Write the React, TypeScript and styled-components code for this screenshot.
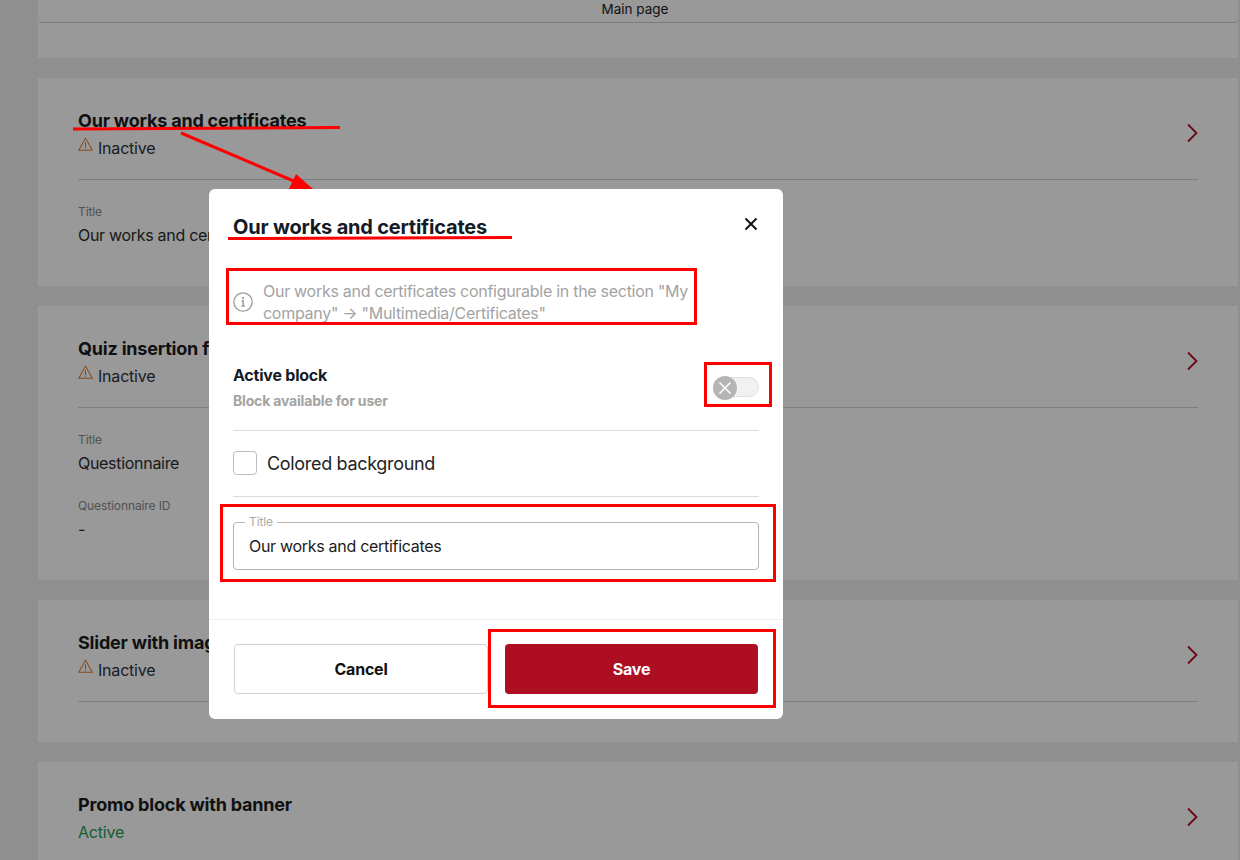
import React from "react";
import styled, { createGlobalStyle } from "styled-components";

const Global = createGlobalStyle`
  html, body { margin: 0; padding: 0; height: 100%; overflow: hidden; }
  body { background: #ffffff; font-family: Inter, "Open Sans", "Liberation Sans", sans-serif; }
  * { box-sizing: border-box; }
`;

const Page = styled.div`
  position: relative;
  width: 1240px;
  height: 860px;
  overflow: hidden;
  background: #eeeeee;
  padding: 0 2px 0 38px;
`;

const TopCard = styled.section`
  height: 58px;
  background: #ffffff;
  margin-bottom: 20px;
`;

const TabBar = styled.div`
  height: 23px;
  border-bottom: 1px solid #cfcfcf;
  border-radius: 0 0 4px 4px;
  text-align: center;
  font-size: 13.5px;
  line-height: 18px;
  color: #1c1c1c;
  padding-right: 6px;
`;

const Card = styled.section<{ $h: number }>`
  height: ${(p) => p.$h}px;
  background: #ffffff;
  margin-bottom: 20px;
  padding: 32px 40px 0;
  position: relative;
`;

const CardHead = styled.div<{ $sep: boolean }>`
  display: flex;
  align-items: center;
  justify-content: space-between;
  height: 70px;
  border-bottom: 1px solid ${(p) => (p.$sep ? "#d2d2d2" : "transparent")};
  padding-bottom: 20px;
`;

const CardTitle = styled.h3`
  margin: 0 0 5px;
  font-size: 18px;
  line-height: 22px;
  font-weight: 700;
  color: #1c1c1c;
  letter-spacing: -0.2px;
`;

const Status = styled.div<{ $active?: boolean }>`
  display: flex;
  align-items: center;
  gap: 5px;
  font-size: 16px;
  line-height: 22px;
  color: ${(p) => (p.$active ? "#1f9d55" : "#2a3242")};
  letter-spacing: -0.2px;
`;

const WarnIcon = styled.svg`
  width: 15px;
  height: 15px;
  margin-top: -8px;
  color: #e57c1f;
`;

const Chevron = styled.svg`
  width: 14px;
  height: 20px;
  margin: -4px 0 0;
  color: #ae0e22;
`;

const FieldGroup = styled.div`
  padding-top: 24px;
  display: flex;
  flex-direction: column;
  gap: 24px;
`;

const Field = styled.div``;

const FieldLabel = styled.div`
  font-size: 12px;
  line-height: 16px;
  color: #8a8a8a;
  letter-spacing: -0.1px;
`;

const FieldValue = styled.div`
  margin-top: 4px;
  font-size: 16px;
  line-height: 22px;
  color: #2c2c2c;
  letter-spacing: -0.3px;
`;

const Overlay = styled.div`
  position: absolute;
  inset: 0;
  background: rgba(0, 0, 0, 0.4);
`;

const Modal = styled.div`
  position: absolute;
  left: 209px;
  top: 189px;
  width: 574px;
  height: 530px;
  background: #ffffff;
  border-radius: 6px;
  display: flex;
  flex-direction: column;
`;

const ModalBody = styled.div`
  flex: 1;
  padding: 0 24px;
`;

const ModalHead = styled.div`
  display: flex;
  align-items: center;
  justify-content: space-between;
  height: 70px;
  padding: 0;
`;

const ModalTitle = styled.h2`
  margin: 6px 0 0;
  font-size: 20px;
  line-height: 28px;
  font-weight: 700;
  color: #141a26;
  letter-spacing: -0.21px;
`;

const CloseBtn = styled.button`
  border: 0;
  background: none;
  padding: 0;
  width: 16px;
  height: 16px;
  display: flex;
  margin: 0;
  color: #141414;
`;

const Info = styled.div`
  display: flex;
  align-items: center;
  gap: 10px;
  margin-top: 21px;
`;

const InfoIcon = styled.svg`
  width: 20px;
  height: 20px;
  flex: none;
  color: #9c9c9c;
`;

const InfoText = styled.p`
  margin: 0;
  font-size: 16px;
  line-height: 22px;
  color: #a3a3a3;
  letter-spacing: -0.28px;
`;

const ActiveRow = styled.div`
  display: flex;
  align-items: center;
  justify-content: space-between;
  height: 107px;
  padding-top: 21px;
  border-bottom: 1px solid #dcdcdc;
`;

const ActiveCol = styled.div`
  display: flex;
  flex-direction: column;
  gap: 6px;
`;

const ActiveName = styled.div`
  font-size: 16px;
  line-height: 20px;
  font-weight: 700;
  color: #141a26;
  letter-spacing: -0.22px;
`;

const ActiveHint = styled.div`
  font-size: 14px;
  line-height: 20px;
  font-weight: 700;
  color: #a3a3a3;
  letter-spacing: -0.18px;
`;

const Toggle = styled.div`
  position: relative;
  width: 46px;
  height: 20px;
  background: #f1f1f1;
  border: 1px solid #dedede;
  border-radius: 10px;
  margin-bottom: 2px;
`;

const Knob = styled.div`
  position: absolute;
  left: -1px;
  top: -2px;
  width: 24px;
  height: 24px;
  border-radius: 50%;
  background: #b5b5b5;
  display: flex;
  align-items: center;
  justify-content: center;
  color: #ffffff;
`;

const CheckRow = styled.label`
  display: flex;
  align-items: center;
  gap: 10px;
  height: 66px;
  border-bottom: 1px solid #dcdcdc;
  font-size: 18px;
  color: #232323;
  letter-spacing: -0.32px;
`;

const CheckBox = styled.span`
  width: 24px;
  height: 24px;
  border: 1px solid #bdbdbd;
  border-radius: 4px;
  margin-top: -2px;
  background: #ffffff;
`;

const InputWrap = styled.fieldset`
  margin: 19px 0 0;
  padding: 0 15px;
  height: 54px;
  border: 1px solid #b5b5b5;
  border-radius: 4px;
  min-width: 0;
`;

const InputLegend = styled.legend`
  padding: 0 4px;
  margin-left: -4px;
  font-size: 12px;
  line-height: 12px;
  color: #a8a8a8;
  letter-spacing: -0.1px;
`;

const InputValue = styled.div`
  font-size: 16px;
  line-height: 22px;
  margin-top: 7px;
  color: #1c1c1c;
  letter-spacing: -0.3px;
`;

const Footer = styled.div`
  display: flex;
  gap: 17px;
  height: 100px;
  padding: 24px 25px 25px;
  border-top: 1px solid #f0f0f0;
`;

const BaseBtn = styled.button`
  height: 50px;
  border-radius: 4px;
  font: 700 16px Inter, "Liberation Sans", sans-serif;
  letter-spacing: -0.2px;
`;

const CancelBtn = styled(BaseBtn)`
  flex: 1;
  background: #ffffff;
  border: 1px solid #d2d2d2;
  color: #111111;
`;

const SaveBtn = styled(BaseBtn)`
  width: 253px;
  background: #ae0e22;
  border: 0;
  color: #ffffff;
`;

const RedBox = styled.div<{ $x: number; $y: number; $w: number; $h: number }>`
  position: absolute;
  left: ${(p) => p.$x}px;
  top: ${(p) => p.$y}px;
  width: ${(p) => p.$w}px;
  height: ${(p) => p.$h}px;
  border: 3px solid #ff0000;
  pointer-events: none;
`;

const Annotation = styled.svg`
  position: absolute;
  left: 0;
  top: 0;
  pointer-events: none;
`;

const Warn = () => (
  <WarnIcon viewBox="0 0 16 16" fill="none" stroke="currentColor" strokeWidth="1.1" strokeLinejoin="round" strokeLinecap="round">
    <path d="M8 1.2 15.200 14.200H.8Z" />
    <path d="M8 6v4.400M8 12.200v.2" />
  </WarnIcon>
);

const Arrow = () => (
  <Chevron viewBox="0 0 14 20" fill="none" stroke="currentColor" strokeWidth="1.8">
    <path d="M4 1.500 12.500 10 4 18.500" />
  </Chevron>
);

const rows = [
  { t: "Our works and certificates", h: 208, fields: [["Title", "Our works and certificates"]] },
  { t: "Quiz insertion for", h: 274, fields: [["Title", "Questionnaire"], ["Questionnaire ID", "-"]] },
  { t: "Slider with images", h: 142, fields: [] as string[][] },
];

export default function App() {
  return (
    <Page>
      <Global />
      <TopCard>
        <TabBar>Main page</TabBar>
      </TopCard>
      {rows.map((r) => (
        <Card key={r.t} $h={r.h}>
          <CardHead $sep>
            <div>
              <CardTitle>{r.t}</CardTitle>
              <Status><Warn />Inactive</Status>
            </div>
            <Arrow />
          </CardHead>
          {r.fields.length > 0 && (
            <FieldGroup>
              {r.fields.map(([l, v]) => (
                <Field key={l}>
                  <FieldLabel>{l}</FieldLabel>
                  <FieldValue>{v}</FieldValue>
                </Field>
              ))}
            </FieldGroup>
          )}
        </Card>
      ))}
      <Card $h={120}>
        <CardHead $sep={false}>
          <div>
            <CardTitle>Promo block with banner</CardTitle>
            <Status $active>Active</Status>
          </div>
          <Arrow />
        </CardHead>
      </Card>
      <Overlay />
      <Modal>
        <ModalBody>
          <ModalHead>
            <ModalTitle>Our works and certificates</ModalTitle>
            <CloseBtn aria-label="Close">
              <svg width="16" height="16" viewBox="0 0 16 16" fill="none" stroke="currentColor" strokeWidth="2">
                <path d="M2.500 2.500l11 11M13.500 2.500l-11 11" />
              </svg>
            </CloseBtn>
          </ModalHead>
          <Info>
            <InfoIcon viewBox="0 0 20 20" fill="none" stroke="currentColor" strokeWidth="1.3">
              <circle cx="10" cy="10" r="9.200" />
              <path d="M8.500 9h1.700v5M8.500 14h3.200" strokeWidth="1.500" />
              <circle cx="10" cy="6.200" r="1.100" fill="currentColor" stroke="none" />
            </InfoIcon>
            <InfoText>Our works and certificates configurable in the section "My company" → "Multimedia/Certificates"</InfoText>
          </Info>
          <ActiveRow>
            <ActiveCol>
              <ActiveName>Active block</ActiveName>
              <ActiveHint>Block available for user</ActiveHint>
            </ActiveCol>
            <Toggle>
              <Knob>
                <svg width="14" height="14" viewBox="0 0 14 14" fill="none" stroke="currentColor" strokeWidth="1.500">
                  <path d="M1.500 1.500l11 11M12.500 1.500l-11 11" />
                </svg>
              </Knob>
            </Toggle>
          </ActiveRow>
          <CheckRow>
            <CheckBox />
            Colored background
          </CheckRow>
          <InputWrap>
            <InputLegend>Title</InputLegend>
            <InputValue>Our works and certificates</InputValue>
          </InputWrap>
        </ModalBody>
        <Footer>
          <CancelBtn>Cancel</CancelBtn>
          <SaveBtn>Save</SaveBtn>
        </Footer>
      </Modal>
      <RedBox $x={226} $y={268} $w={471} $h={57} />
      <RedBox $x={704} $y={362} $w={68} $h={45} />
      <RedBox $x={220} $y={504} $w={556} $h={78} />
      <RedBox $x={488} $y={629} $w={288} $h={79} />
      <Annotation width="1240" height="860" viewBox="0 0 1240 860">
        <path d="M73 129 340 127.500" stroke="#ff0000" strokeWidth="3" fill="none" />
        <path d="M181 133 296 182" stroke="#ff0000" strokeWidth="3" fill="none" />
        <path d="M289 189 313 189 296 174Z" fill="#ff0000" />
        <path d="M228 238.500 512 237.500" stroke="#ff0000" strokeWidth="3" fill="none" />
      </Annotation>
    </Page>
  );
}
